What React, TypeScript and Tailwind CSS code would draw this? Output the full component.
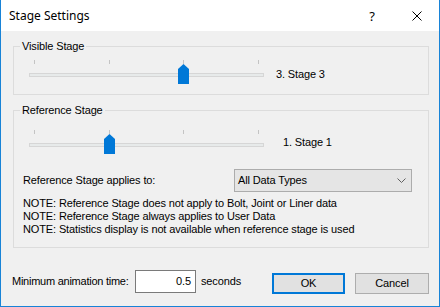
import React from "react";

function Slider({ thumbClass }: { thumbClass: string }) {
  return (
    <div className="relative w-[235px] h-[24px] shrink-0">
      <div className="flex justify-between px-[5px] h-[4px]">
        <div className="w-px h-[4px] bg-[#c4c4c4]" />
        <div className="w-px h-[4px] bg-[#c4c4c4]" />
        <div className="w-px h-[4px] bg-[#c4c4c4]" />
        <div className="w-px h-[4px] bg-[#c4c4c4]" />
      </div>
      <div className="mt-[9px] h-[4px] border border-[#d6d6d6] bg-[#e7eaea]" />
      <svg
        className={"absolute top-[4px] " + thumbClass}
        width="11"
        height="20"
        viewBox="0 0 11 20"
      >
        <polygon points="5.5,0 11,5 11,20 0,20 0,5" fill="#0078d7" />
      </svg>
    </div>
  );
}

export default function App() {
  return (
    <div className="w-[440px] h-[307px] border-x border-b border-[#1883d7] bg-[#f0f0f0] flex flex-col overflow-hidden font-['Liberation_Sans',Arial,sans-serif] text-[11px] leading-[13px] tracking-[-0.13px] text-black">
      {/* title bar */}
      <div className="h-[31px] bg-white flex items-center pl-[8px] shrink-0 tracking-normal">
        <span className="font-['Noto_Sans',sans-serif] text-[12px] leading-[16px] pt-[1px]">
          Stage Settings
        </span>
        <span className="ml-auto font-['Noto_Sans',sans-serif] text-[13px] leading-[16px] pt-[1px]">
          ?
        </span>
        <svg className="ml-[37px] mr-[17px]" width="10" height="10" viewBox="0 0 10 10">
          <path d="M0.5 0.5 L9.5 9.5 M9.5 0.5 L0.5 9.5" stroke="#000" strokeWidth="1" fill="none" />
        </svg>
      </div>

      {/* client */}
      <div className="flex-1 flex flex-col">
        {/* Visible Stage group */}
        <div className="mt-[15px] ml-[12px] mr-[10px] border border-[#dcdcdc] pb-[10px]">
          <div className="-mt-[7px] ml-[6px] h-[13px] flex">
            <span className="bg-[#f0f0f0] px-[2px]">Visible Stage</span>
          </div>
          <div className="mt-[7px] ml-[15px] flex items-start">
            <Slider thumbClass="left-[149px]" />
            <span className="ml-[12px] mt-[8px]">3. Stage 3</span>
          </div>
        </div>

        {/* Reference Stage group */}
        <div className="mt-[15px] ml-[12px] mr-[10px] border border-[#dcdcdc] pb-[11px]">
          <div className="-mt-[7px] ml-[6px] h-[13px] flex">
            <span className="bg-[#f0f0f0] px-[2px]">Reference Stage</span>
          </div>
          <div className="mt-[13px] ml-[15px] flex items-start">
            <Slider thumbClass="left-[75px]" />
            <span className="ml-[19px] mt-[6px]">1. Stage 1</span>
          </div>
          <div className="mt-[15px] ml-[9px] flex items-center">
            <span className="w-[211px] shrink-0">Reference Stage applies to:</span>
            <div className="w-[178px] h-[23px] border border-[#acacac] bg-[#e5e5e5] flex items-center pl-[3px]">
              <span>All Data Types</span>
              <svg className="ml-auto mr-[5px]" width="9" height="5" viewBox="0 0 9 5">
                <path d="M0.5 0.5 L4.5 4.5 L8.5 0.5" stroke="#606060" strokeWidth="1" fill="none" />
              </svg>
            </div>
          </div>
          <div className="mt-[5px] ml-[9px] flex flex-col">
            <span>NOTE: Reference Stage does not apply to Bolt, Joint or Liner data</span>
            <span>NOTE: Reference Stage always applies to User Data</span>
            <span>NOTE: Statistics display is not available when reference stage is used</span>
          </div>
        </div>

        {/* bottom row */}
        <div className="mt-[22px] ml-[11px] flex items-start">
          <span className="w-[123px] shrink-0 mt-[5px] tracking-[-0.25px]">Minimum animation time:</span>
          <div className="w-[61px] h-[23px] border border-[#7a7a7a] bg-white flex items-center justify-end pr-[4px]">
            <span>0.5</span>
          </div>
          <span className="ml-[5px] w-[71px] shrink-0 mt-[5px]">seconds</span>
          <div className="mt-[3px] w-[73px] h-[21px] border-2 border-[#0078d7] bg-[#e1e1e1] flex items-center justify-center">
            OK
          </div>
          <div className="mt-[3px] ml-[10px] w-[74px] h-[21px] border border-[#adadad] bg-[#e1e1e1] flex items-center justify-center">
            Cancel
          </div>
        </div>
      </div>
    </div>
  );
}
